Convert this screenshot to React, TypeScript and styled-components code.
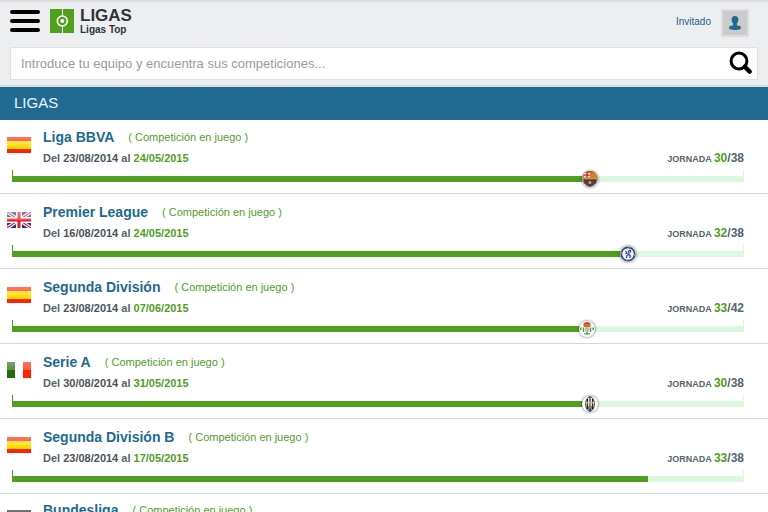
import React from "react";
import styled, { createGlobalStyle } from "styled-components";

const GlobalStyle = createGlobalStyle`
  * { box-sizing: border-box; }
  html { scrollbar-width: none; }
  body { margin: 0; background: #fff; font-family: "Liberation Sans", Arial, Helvetica, sans-serif; color: #56646e; }
`;

const Header = styled.header`
  background: #edeef0;
  border-top: 2px solid #dcdde0;
  border-bottom: 2px solid #dcdde0;
  padding: 7px 10px 5px;
`;
const TopBar = styled.div`
  display: flex;
  align-items: flex-start;
  height: 38px;
`;
const MenuButton = styled.button`
  display: flex;
  flex-direction: column;
  gap: 5px;
  width: 30px;
  margin: 1px 10px 0 0;
  padding: 0;
  border: 0;
  background: none;
`;
const MenuLine = styled.span`
  height: 4px;
  width: 100%;
  border-radius: 2px;
  background: #000;
`;
const Brand = styled.a`
  display: flex;
  gap: 6px;
  color: #2d3439;
  text-decoration: none;
`;
const BrandText = styled.div`
  display: flex;
  flex-direction: column;
  font-weight: bold;
`;
const BrandTitle = styled.span`
  font-size: 17px;
  line-height: 14px;
`;
const BrandSub = styled.span`
  font-size: 10px;
  line-height: 13px;
`;
const Account = styled.a`
  display: flex;
  gap: 10px;
  margin: 0 9px 0 auto;
  color: #1d628a;
  font-size: 10px;
  line-height: 25px;
  text-decoration: none;
`;
const Avatar = styled.span`
  display: flex;
  width: 28px;
  height: 28px;
  align-items: center;
  justify-content: center;
  border: 2px solid #dcdde0;
  background: #cbcbcb;
`;
const SearchForm = styled.form`
  display: flex;
  align-items: center;
  height: 33px;
  padding: 0 4px 2px 10px;
  border: 1px solid #dfe0e2;
  background: #fff;
`;
const SearchInput = styled.input`
  flex: 1;
  min-width: 0;
  padding: 2px 0 0;
  border: 0;
  outline: 0;
  background: none;
  font: 13px/18px "Liberation Sans", Arial, sans-serif;
  color: #333;
  &::placeholder { color: #9b9b9b; opacity: 1; }
`;
const SearchButton = styled.button`
  display: flex;
  padding: 0;
  border: 0;
  background: none;
`;
const Banner = styled.h1`
  margin: 0;
  padding: 0 14px 2px;
  background: #206a91;
  color: #e9f5fb;
  font-size: 15px;
  font-weight: normal;
  line-height: 31px;
`;
const List = styled.ul`
  margin: 0;
  padding: 0;
  list-style: none;
`;
const Row = styled.li`
  padding: 10px 24px 11px 7px;
  border-bottom: 1px solid #d3d8dc;
  &:first-child { padding-top: 9px; }
  &:last-child { padding-top: 8px; }
`;
const Info = styled.div`
  display: flex;
  align-items: flex-start;
`;
const FlagBox = styled.span`
  display: flex;
  width: 36px;
  padding-top: 8px;
`;
const Details = styled.div`
  flex: 1;
`;
const Heading = styled.div`
  display: flex;
  gap: 14px;
  line-height: 16px;
`;
const League = styled.a`
  color: #206a91;
  font-size: 14px;
  font-weight: bold;
  text-decoration: none;
`;
const Status = styled.span`
  color: #4fa01f;
  font-size: 11px;
`;
const Meta = styled.div`
  display: flex;
  justify-content: space-between;
  padding-top: 6px;
  font-size: 11px;
  font-weight: bold;
  line-height: 14px;
`;
const DateText = styled.span<{ $green?: boolean }>`
  color: ${(p) => (p.$green ? "#4fa01f" : "#4b545b")};
`;
const Round = styled.span`
  font-size: 9px;
`;
const RoundNumber = styled.span<{ $green?: boolean }>`
  font-size: 12px;
  color: ${(p) => (p.$green ? "#4fa01f" : "#56646e")};
`;
const Track = styled.div`
  position: relative;
  display: flex;
  align-items: flex-end;
  height: 12px;
  margin: 4px 0 0 5px;
  background:
    linear-gradient(#4fa01f, #4fa01f) left / 1px 100% no-repeat,
    linear-gradient(#dcf8e0, #dcf8e0) right / 1px 100% no-repeat;
`;
const Rail = styled.div`
  flex: 1;
  height: 6px;
  background: #dcf8e0;
`;
const Fill = styled.div`
  height: 100%;
  background: #4fa01f;
`;
const Crest = styled.span`
  position: absolute;
  top: 1px;
  display: flex;
  width: 16px;
  height: 16px;
  margin-left: -8px;
  border-radius: 50%;
  background: #fff;
  box-shadow: 0 0 3px rgba(0, 0, 0, 0.6);
`;

type FlagKind = "es" | "gb" | "it" | "de";
type CrestKind = "barcelona" | "chelsea" | "betis" | "juventus";

const LogoIcon = () => (
  <svg width="24" height="24" viewBox="0 0 24 24" aria-hidden="true">
    <path fill="#4fa01f" d="M0 0h24v24H0z" />
    <path stroke="#e4f2da" d="M12.5 0v7M12.5 17v7" />
    <circle cx="12.3" cy="12" r="5" fill="none" stroke="#fff" strokeWidth="1.6" />
    <circle cx="12.3" cy="12" r="2" fill="#fff" />
  </svg>
);

const PersonIcon = () => (
  <svg width="12" height="14" viewBox="0 0 12 14" aria-hidden="true">
    <path
      fill="#206a91"
      d="M6 0c2.200 0 3.400 1.500 3.400 3.600 0 1.700-.6 3-1.500 3.900v1.700l2.700.9c.9.3 1.400.9 1.400 1.700C12 13.400 9.500 14 6 14s-6-.6-6-2.200c0-.8.5-1.400 1.400-1.700l2.700-.9V7.500C3.200 6.600 2.600 5.300 2.600 3.600 2.600 1.500 3.800 0 6 0z"
    />
  </svg>
);

const SearchIcon = () => (
  <svg width="24" height="24" viewBox="0 0 24 24" aria-hidden="true" fill="none" stroke="#000">
    <circle cx="10" cy="10" r="7.900" strokeWidth="3" />
    <path d="M15.700 15.700l5 4.900" strokeWidth="4.400" strokeLinecap="round" />
  </svg>
);

const flagArt: Record<FlagKind, React.ReactNode> = {
  es: (
    <>
      <path fill="#ff2100" d="M0 0h24v16H0z" />
      <path fill="#ffdb00" d="M0 4h24v8H0z" />
    </>
  ),
  gb: (
    <>
      <path fill="#173c7d" d="M0 0h24v16H0z" />
      <path stroke="#fff" strokeWidth="3.400" d="M0 0l24 16M24 0L0 16" />
      <path stroke="#e2202c" strokeWidth="1.200" d="M0 0l24 16M24 0L0 16" />
      <path stroke="#fff" strokeWidth="6" d="M12 0v16M0 8h24" />
      <path stroke="#e51c23" strokeWidth="3" d="M12 0v16M0 8h24" />
    </>
  ),
  it: (
    <>
      <path fill="#246b0d" d="M0 0h8v16H0z" />
      <path fill="#fff" d="M8 0h8v16H8z" />
      <path fill="#ff2100" d="M16 0h8v16h-8z" />
    </>
  ),
  de: (
    <>
      <path fill="#1b1f20" d="M0 0h24v5H0z" />
      <path fill="#ff2100" d="M0 5h24v6H0z" />
      <path fill="#ffdb00" d="M0 11h24v5H0z" />
    </>
  ),
};

const Flag = ({ kind }: { kind: FlagKind }) => (
  <svg width="24" height="16" viewBox="0 0 24 16" aria-hidden="true">
    <defs>
      <linearGradient id={"gloss-" + kind} x1="0" y1="0" x2="0" y2="1">
        <stop offset="0" stopColor="#fff" stopOpacity="0.38" />
        <stop offset="1" stopColor="#fff" stopOpacity="0.24" />
      </linearGradient>
    </defs>
    {flagArt[kind]}
    <path fill={`url(#gloss-${kind})`} d="M0 0h24v8H0z" />
  </svg>
);

const crestArt: Record<CrestKind, React.ReactNode> = {
  barcelona: (
    <>
      <path fill="#8b6b33" d="M3 1.500L6 0h4l3 1.500 2 3 .8 3.500-1.300 4-3.500 3.200L8 16l-3-.8L1.500 12 .2 8 1 4.500z" />
      <path fill="#f4e5dd" d="M2.500 2H8v4.500H1.500z" />
      <path fill="#d6232d" d="M4.300 1.500h1.500v5H4.300zM2 3.400h6v1.300H2z" />
      <path fill="#ef8a17" d="M8 1.500h5l1.500 5H8z" />
      <path stroke="#d6501e" strokeWidth=".8" d="M9.800 2v4M11.800 2v4" />
      <path fill="#c8a030" d="M1 6.500h14v2H1z" />
      <path fill="#23387d" d="M1.500 8.500h13L13 12.500l-5 3-5-3z" />
      <path stroke="#a72045" strokeWidth="1.500" d="M5 8.500V13M11 8.500V13M8 8.500V14" />
      <circle cx="8" cy="11.500" r="1.500" fill="#d5ad1d" />
    </>
  ),
  chelsea: (
    <>
      <circle cx="8" cy="8" r="6.700" fill="#eef1f9" stroke="#33417f" strokeWidth="1.700" />
      <circle cx="8" cy="8" r="6.700" fill="none" stroke="#ad6777" strokeWidth="1.500" strokeDasharray="2 8.500" />
      <path
        fill="none"
        stroke="#2647a0"
        strokeWidth="1.200"
        d="M10.500 4L8.500 5.200 9 8l-2 1.500-.5 2.500M5.500 5l1.500 2-1.500 1M9 8.500l1.500 1.500-1 2M10.500 4v2.500"
      />
    </>
  ),
  betis: (
    <>
      <path fill="#cf3c22" d="M4.500 2.500l2-1.300h3l2 1.300V5l-1 1h-5l-1-1z" />
      <path fill="#e6a62c" d="M5 3.500h6v1H5zM6 5.500h4v1H6z" />
      <path stroke="#45a344" strokeWidth="1.500" d="M1.800 6.500V9M4.500 6.500V11M11.500 6.500V11M14.200 6.500V9M8 10.500V14M6 12v1.500M10 12v1.500" />
      <path fill="#b7b6bd" d="M6.200 6.500h3.600v4H6.200z" />
    </>
  ),
  juventus: (
    <>
      <ellipse cx="8" cy="8" rx="4.300" ry="7.300" fill="#fff" stroke="#26282b" />
      <path stroke="#26282b" strokeWidth="1.200" d="M5.500 3v10M8 1v14M10.500 3v10" />
      <path fill="#d7bd75" d="M3.700 6h8.600v1.400H3.700z" />
      <path fill="#333" d="M6 10h4v3l-2 1.500L6 13z" />
      <path stroke="#fff" strokeWidth=".7" d="M7 10v3M9 10v3" />
    </>
  ),
};

interface LeagueData {
  name: string;
  flag: FlagKind;
  start: string;
  end: string;
  round: number;
  total: number;
  crest?: CrestKind;
}

const leagues: LeagueData[] = [
  { name: "Liga BBVA", flag: "es", start: "23/08/2014", end: "24/05/2015", round: 30, total: 38, crest: "barcelona" },
  { name: "Premier League", flag: "gb", start: "16/08/2014", end: "24/05/2015", round: 32, total: 38, crest: "chelsea" },
  { name: "Segunda División", flag: "es", start: "23/08/2014", end: "07/06/2015", round: 33, total: 42, crest: "betis" },
  { name: "Serie A", flag: "it", start: "30/08/2014", end: "31/05/2015", round: 30, total: 38, crest: "juventus" },
  { name: "Segunda División B", flag: "es", start: "23/08/2014", end: "17/05/2015", round: 33, total: 38 },
  { name: "Bundesliga", flag: "de", start: "22/08/2014", end: "23/05/2015", round: 29, total: 34 },
];

const LeagueRow = ({ league }: { league: LeagueData }) => {
  const progress = `${(league.round / league.total) * 100}%`;
  return (
    <Row>
      <Info>
        <FlagBox>
          <Flag kind={league.flag} />
        </FlagBox>
        <Details>
          <Heading>
            <League href="#">{league.name}</League>
            <Status>( Competición en juego )</Status>
          </Heading>
          <Meta>
            <span>
              Del <DateText>{league.start}</DateText> al <DateText $green>{league.end}</DateText>
            </span>
            <Round>
              JORNADA <RoundNumber $green>{league.round}</RoundNumber>
              <RoundNumber>/{league.total}</RoundNumber>
            </Round>
          </Meta>
        </Details>
      </Info>
      <Track>
        <Rail>
          <Fill style={{ width: progress }} />
        </Rail>
        {league.crest && (
          <Crest style={{ left: progress }}>
            <svg width="16" height="16" viewBox="0 0 16 16" aria-hidden="true">
              {crestArt[league.crest]}
            </svg>
          </Crest>
        )}
      </Track>
    </Row>
  );
};

export default function App() {
  return (
    <>
      <GlobalStyle />
      <Header>
        <TopBar>
          <MenuButton type="button" aria-label="Menú">
            <MenuLine />
            <MenuLine />
            <MenuLine />
          </MenuButton>
          <Brand href="#">
            <LogoIcon />
            <BrandText>
              <BrandTitle>LIGAS</BrandTitle>
              <BrandSub>Ligas Top</BrandSub>
            </BrandText>
          </Brand>
          <Account href="#">
            Invitado
            <Avatar>
              <PersonIcon />
            </Avatar>
          </Account>
        </TopBar>
        <SearchForm role="search" onSubmit={(e) => e.preventDefault()}>
          <SearchInput
            type="text"
            aria-label="Buscar equipo"
            placeholder="Introduce tu equipo y encuentra sus competiciones..."
          />
          <SearchButton type="submit" aria-label="Buscar">
            <SearchIcon />
          </SearchButton>
        </SearchForm>
      </Header>
      <main>
        <Banner>LIGAS</Banner>
        <List>
          {leagues.map((league) => (
            <LeagueRow key={league.name} league={league} />
          ))}
        </List>
      </main>
    </>
  );
}
